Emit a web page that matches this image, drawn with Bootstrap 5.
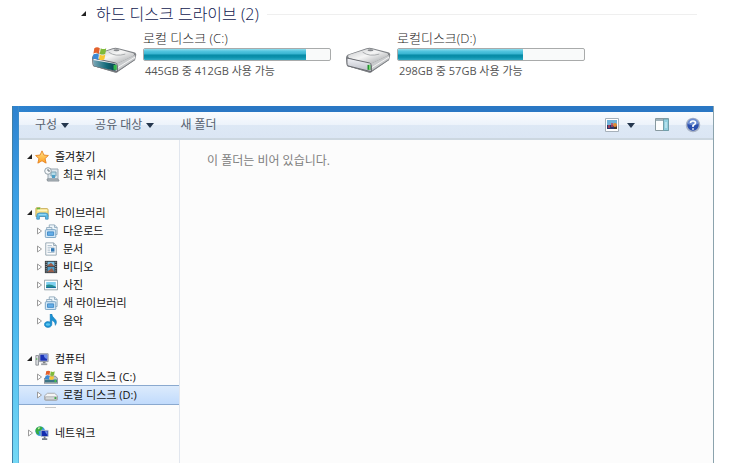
<!DOCTYPE html>
<html lang="ko">
<head>
<meta charset="utf-8">
<meta name="viewport" content="width=device-width, initial-scale=1">
<title>하드 디스크 드라이브</title>
<link href="https://cdn.jsdelivr.net/npm/bootstrap@5.3.0/dist/css/bootstrap.min.css" rel="stylesheet">
<style>
html, body { height: 100%; }
body { font-family: "Open Sans", "Noto Sans CJK KR", sans-serif; font-size: 12px; line-height: 18px; color: #111; overflow: hidden; }
svg { display: block; flex: none; }
.drives { padding: 3px 32px 26px 80px; }
.drives-title { font-size: 16px; line-height: 22px; color: #10184f; font-weight: 300; }
.drives-rule { height: 1px; background: #efefef; }
.drive-list { gap: 14px; padding: 4px 0 0 11px; }
.drive { width: 240px; gap: 5px; color: #1c1c1c; }
.drive-name { font-size: 13px; line-height: 19px; font-weight: 300; }
.drive-free { font-size: 11px; line-height: 18px; padding: 1px 0 0 2px; color: #555; }
.drive-icon { margin-top: 17px; }
.meter { height: 13px; border: 1px solid #a9abab; border-radius: 2px; background: #f9fafa; }
.meter-fill { background: linear-gradient(#8fdcec 0, #52c5df 20%, #35b2cf 48%, #078aa5 52%, #0b91ac 75%, #2cabc5 100%); }
.explorer { margin: 0 15px 0 12px; padding: 6px 0 0 7px; border-right: 1px solid #8ba3ad; background: linear-gradient(90deg, #3f7fa8 1px, transparent 1px, transparent 6px, #4b93c0 6px, transparent 7px), linear-gradient(90deg, transparent 7px, #2a77c4 60px) top / 100% 6px no-repeat, linear-gradient(#2d82cf, #3b9fe4 25%, #4bb8ee 60%, #74d8f5); }
.pane { background: #fcfcfc; }
.commands { height: 28px; background: linear-gradient(#fafcfe 0, #edf3fb 48%, #dde8f5 52%, #dbe6f4 100%); border-bottom: 2px solid #ccd7e0; padding: 0 12px 0 16px; }
.cmd { border: 0; background: none; padding: 0; color: #57616f; font: inherit; line-height: 20px; display: flex; align-items: center; gap: 4px; }
.cmd + .cmd-text { margin-left: 26px; }
.caret { width: 0; height: 0; border: 4px solid transparent; border-top: 5px solid #24364d; border-bottom: 0; }
.tree { width: 161px; border-right: 1px solid #e1e6ee; padding-top: 8px; font-size: 11px; }
.tree ul { margin: 0; padding: 0; list-style: none; }
.tree .groups { gap: 20px; }
.tree a { display: flex; align-items: center; height: 18px; gap: 1px; color: inherit; text-decoration: none; white-space: nowrap; padding-left: 7px; }
.tree span { padding-left: 5px; }
.tree ul ul a { padding-left: 16px; }
.tree ul ul span { padding-left: 4px; }
.tree ul ul .no-arrow { padding-left: 25px; }
.tree ul ul .no-arrow span { padding-left: 2px; }
.tree a.chosen { background: linear-gradient(#dcebfc, #c1dbfc); box-shadow: 0 -1px #8aa9cf, 0 1px #8aa9cf; }
.cut-off::after { content: ""; display: block; width: 11px; height: 1px; margin: 3px 0 -4px 26px; background: #c9c9c9; }
.empty-note { color: #808080; padding: 12px 27px; }
</style>
</head>
<body class="d-flex flex-column bg-white">
<svg width="0" height="0" class="position-absolute" aria-hidden="true">
  <defs>
    <linearGradient id="metal" x1="0" y1="0" x2="1" y2="1"><stop offset="0" stop-color="#c4c6c8"/><stop offset=".45" stop-color="#f5f5f5"/><stop offset="1" stop-color="#9b9ea1"/></linearGradient>
    <linearGradient id="front" x1="0" y1="0" x2="0" y2="1"><stop offset="0" stop-color="#f3f4f8"/><stop offset="1" stop-color="#b8bbc4"/></linearGradient>
    <linearGradient id="teal" x1="0" y1="0" x2="1" y2="0"><stop offset="0" stop-color="#7da8b8"/><stop offset=".6" stop-color="#126a79"/><stop offset="1" stop-color="#08424d"/></linearGradient>
    <linearGradient id="gold" x1="0" y1="0" x2="0" y2="1"><stop offset="0" stop-color="#ffe58a"/><stop offset="1" stop-color="#ff9d1e"/></linearGradient>
    <symbol id="drive" viewBox="0 0 48 28">
      <path d="M2 20 26 27 45 14V9L26 23 3 16z" fill="#77797c"/>
      <path d="M1 12Q1 9 4 8L22 2Q25 1 28 2L44 6Q47 7 46 10L45 14 27 26 25 27 2 20z" fill="#818488"/>
      <path d="M3 10Q4 8 6 8L22 3Q25 2 28 3L43 7Q45 8 43 10L26 18 4 12z" fill="url(#metal)"/>
      <path d="M26 18 45 9 45 13 27 25z" fill="#c9cbcd"/>
      <path d="M27 22 45 11" stroke="#f6f6f6"/>
      <path d="M2 12 25 17Q27 18 27 20V26L3 20Q2 19 2 17z" fill="url(#front)" stroke="#686b70"/>
      <path d="M23 19h3v5h-3z" fill="#1f8f2c"/><path d="M25 19v5" stroke="#79e070"/>
      <ellipse cx="26" cy="4" rx="3" ry="1" fill="#85888c"/>
      <path d="M18 6Q25 11 35 8" fill="none" stroke="#a8abad"/>
    </symbol>
    <symbol id="flag" viewBox="0 0 16 16">
      <path d="M2 2Q5 0 8 2L7 8Q4 6 1 8z" fill="#e3612c"/>
      <path d="M9 2Q12 4 15 2L14 8Q11 10 8 8z" fill="#7fba39"/>
      <path d="M1 9Q4 7 7 9L6 15Q3 13 0 14z" fill="#3b8ad6"/>
      <path d="M8 9Q11 11 14 9L13 14Q10 16 7 14z" fill="#f9c831"/>
    </symbol>
    <symbol id="open" viewBox="0 0 8 8"><path d="M6 1V6H1z" fill="#222"/></symbol>
    <symbol id="closed" viewBox="0 0 8 8"><path d="M2.500 1 6.500 4 2.500 7z" fill="#fff" stroke="#9c9c9c"/></symbol>
    <symbol id="star" viewBox="0 0 16 16"><path d="M8 1 10.2 5.8 15.3 6.3 11.5 9.8 12.7 15 8 12.3 3.3 15 4.5 9.8.7 6.3 5.8 5.8z" fill="url(#gold)" stroke="#e58120"/></symbol>
    <symbol id="recent" viewBox="0 0 16 16">
      <path d="M4 2H14V12H4z" fill="#dce5eb" stroke="#9aa7b1"/><path d="M7 5h5v4H7z" fill="#b6dce9" stroke="#7ba2b6"/><path d="M8 8h3v3H8z" fill="#4d9fc6"/>
      <path d="M3 12H13Q15 12 15 14H5Q3 15 3 12z" fill="#b2bac0" stroke="#8b949b"/>
      <circle cx="4" cy="4" r="3.3" fill="#f5f8fa" stroke="#94a1aa"/><path d="M4 2V4H6" fill="none" stroke="#65717a"/>
    </symbol>
    <symbol id="library" viewBox="0 0 16 16">
      <path d="M1 3Q1 2 2 2H6L7 3H14Q15 3 15 5V12H1z" fill="#f7df83" stroke="#c4a64a"/><path d="M2 3h4" stroke="#65b844" stroke-width="2"/><path d="M3 5H14" stroke="#fff5bd" stroke-width="2"/>
      <path d="M2 15V11Q2 8 5 8H12Q15 8 15 11V15H12V12H5V15z" fill="#58b9e7" stroke="#4d94bd"/><path d="M4 10H13" stroke="#b8e8fa"/>
    </symbol>
    <symbol id="stack" viewBox="0 0 16 16">
      <path d="M6 1H12L15 4V12H6z" fill="#eef6fb" stroke="#91a9bb"/><path d="M12 1V4H15" fill="none" stroke="#91a9bb"/><path d="M3 4H9V14H3z" fill="#e5f0f8" stroke="#91a9bb"/>
      <rect x="1.500" y="6.500" width="12" height="9" rx="1" fill="#d5e8f6" stroke="#6f9cbd"/><path d="M4 9H11V13H4z" fill="#64aee8" stroke="#3e87c4"/>
    </symbol>
    <symbol id="document" viewBox="0 0 16 16">
      <path d="M2 1H11L14 4V15H2z" fill="#fbfcfd" stroke="#8fa0ad"/><path d="M11 1V4H14" fill="#d7e2ea" stroke="#8fa0ad"/><path d="M4 4h5M4 6h8M4 8h3M4 10h3M4 12h8" stroke="#a8bbca"/><path d="M8 7h4v4H8z" fill="#3379b4"/>
    </symbol>
    <symbol id="video" viewBox="0 0 16 16">
      <path d="M1 1H15V15H1z" fill="#32383d"/><path d="M4 2h8v5H4z" fill="#79c2e6"/><path d="M4 8h8v6H4z" fill="#4f9ac5"/><path d="M4 6 8 3 12 7H4zM4 13 9 9 12 14H4z" fill="#985d4a"/>
      <path d="M2.500 2v13M13.500 2v13" stroke="#e0e6e9" stroke-dasharray="1 1.500"/>
    </symbol>
    <symbol id="photo" viewBox="0 0 16 16">
      <path d="M.5 2.500H15.500V13.500H.5z" fill="#fff" stroke="#8d9ba4"/><path d="M2.500 4.500h11v7h-11z" fill="#80d0f0"/><path d="M2.500 8Q7 6 13.500 10V11.500H2.500z" fill="#258e91"/><path d="M2.500 10.500h11v1h-11z" fill="#1768a0"/>
    </symbol>
    <symbol id="music" viewBox="0 0 16 16"><path d="M7 0H9Q9 3 12 5 16 8 13 13 13 9 9 7V12A4.300 3.500 0 1 1 7 9z" fill="#1c91d2" stroke="#0f72b0" stroke-width=".5"/><ellipse cx="4.500" cy="12" rx="2.500" ry="1.500" fill="#5cc7f0"/></symbol>
    <symbol id="computer" viewBox="0 0 16 16">
      <path d="M1 4H4V15H1z" fill="#d9dcdf" stroke="#888d92"/><path d="M2 7v2" stroke="#43b33d"/>
      <path d="M5 2H15V11H5z" fill="#d3d8e2" stroke="#878e9c"/><path d="M6 3h8v7H6z" fill="#1b32b4"/><path d="M10 3h4v5Q10 7 10 3z" fill="#6d8cec"/><path d="M9 11h3v2H9z" fill="#7c8086"/><path d="M7 14h7" stroke="#9a9ea3" stroke-width="2"/>
    </symbol>
    <symbol id="small-drive" viewBox="0 0 16 16">
      <path d="M4 6H12L15.500 9V13Q15.500 14 14 14H2Q.5 14 .5 13V9z" fill="#f4f5f5" stroke="#a2a5a8"/><path d="M1.500 10H14.500V13.500H1.500z" fill="#d5d8da" stroke="#85898d" stroke-width=".6"/><path d="M12 10.500h2v2h-2z" fill="#2da537"/>
    </symbol>
    <symbol id="system-drive" viewBox="0 0 16 16">
      <path d="M4 7H13L16 10V15H0V10z" fill="#b9c1c7" stroke="#757d83"/><path d="M1 11h14v3H1z" fill="#3b7485"/><path d="M12 11h2v3h-2z" fill="#43c34a"/>
      <use href="#flag" x="1" width="12" height="12"/>
    </symbol>
    <symbol id="network" viewBox="0 0 16 16">
      <circle cx="6" cy="6" r="5.500" fill="#3a9bdd"/><path d="M2 2Q6-1 9 2L7 5 4 6 5 10 2 9Q-1 5 2 2z" fill="#37ad42"/><path d="M3 2Q5 1 6 2L4 4z" fill="#d1efac"/>
      <path d="M7 5H15V12H7z" fill="#142cae" stroke="#b0bac8"/><path d="M11 6h3v4z" fill="#7897ea"/><path d="M11 12v2M8 15h6" stroke="#737b86" stroke-width="2"/>
    </symbol>
  </defs>
</svg>

<section class="drives flex-shrink-0">
  <div class="d-flex align-items-center">
    <svg width="8" height="8"><use href="#open"/></svg>
    <h1 class="drives-title mb-0 ms-1 me-2 ps-1">하드 디스크 드라이브 (2)</h1>
    <div class="drives-rule flex-grow-1"></div>
  </div>
  <div class="drive-list d-flex">
    <article class="drive d-flex">
      <svg class="drive-icon" width="47" height="28" viewBox="0 0 48 28"><use href="#drive"/><path d="M2 14 25 18V25L3 20z" fill="url(#teal)"/><path d="M23 19h3v5h-3z" fill="#32b84a"/><use href="#flag" x="1" y="0" width="16" height="15"/></svg>
      <div class="flex-grow-1">
        <div class="drive-name" id="name-c">로컬 디스크 (C:)</div>
        <div class="progress meter" role="progressbar" aria-labelledby="name-c" aria-valuenow="87" aria-valuemin="0" aria-valuemax="100"><div class="progress-bar meter-fill" style="width:87%"></div></div>
        <div class="drive-free">445GB 중 412GB 사용 가능</div>
      </div>
    </article>
    <article class="drive d-flex">
      <svg class="drive-icon" width="47" height="28"><use href="#drive"/></svg>
      <div class="flex-grow-1">
        <div class="drive-name" id="name-d">로컬디스크(D:)</div>
        <div class="progress meter" role="progressbar" aria-labelledby="name-d" aria-valuenow="67" aria-valuemin="0" aria-valuemax="100"><div class="progress-bar meter-fill" style="width:67%"></div></div>
        <div class="drive-free">298GB 중 57GB 사용 가능</div>
      </div>
    </article>
  </div>
</section>

<main class="explorer flex-grow-1 d-flex flex-column">
  <div class="commands d-flex align-items-center flex-shrink-0" role="toolbar" aria-label="폴더 도구">
    <button class="cmd" type="button">구성 <span class="caret"></span></button>
    <button class="cmd cmd-text" type="button">공유 대상 <span class="caret"></span></button>
    <button class="cmd cmd-text" type="button">새 폴더</button>
    <button class="cmd ms-auto" type="button" aria-label="보기 변경">
      <svg width="14" height="14" viewBox="0 0 14 14"><path d="M.5.5h13v13H.5z" fill="#fff" stroke="#a6b0ba"/><path d="M2 2h10v5H2z" fill="#6fb2d9"/><path d="M2 7h10v4H2z" fill="#28376c"/><path d="M4 7v3M7 5v4" stroke="#c1435a" stroke-width="1.500"/><circle cx="10" cy="7" r="2" fill="#e28a30"/><path d="M9 9h3v2H9z" fill="#443528"/></svg>
      <span class="caret ms-1"></span>
    </button>
    <button class="cmd ms-3 ps-1" type="button" aria-label="미리 보기 창">
      <svg width="14" height="14" viewBox="0 0 14 14"><path d="M.5.5h13v12H.5z" fill="#fcfdfd" stroke="#88999f"/><path d="M1 2h8" stroke="#9fb2ba" stroke-width="2"/><path d="M8.500 1h5v11.500h-5z" fill="#91cfdf" stroke="#719faa"/><path d="M11 4v6" stroke="#d8f1f7"/></svg>
    </button>
    <button class="cmd ms-3" type="button" aria-label="도움말">
      <svg width="16" height="16" viewBox="0 0 16 16"><circle cx="8" cy="8" r="6.500" fill="#2b4fae" stroke="#a9b3c6" stroke-width="1.500"/><path d="M2.500 7A5.500 5.500 0 0 1 13.500 7Q8 9 2.500 7" fill="#6e8ed2"/><path d="M5.500 6Q5.500 4 8 4 10.500 4 10.500 6 10.500 7 8 8.500V10M8 11.200v1.500" fill="none" stroke="#fff" stroke-width="1.600"/></svg>
    </button>
  </div>
  <div class="pane d-flex flex-grow-1">
    <nav class="tree flex-shrink-0" aria-label="탐색">
      <ul class="groups d-flex flex-column">
        <li><a href="#"><svg width="8" height="8"><use href="#open"/></svg><svg width="14" height="14"><use href="#star"/></svg><span>즐겨찾기</span></a>
          <ul><li><a class="no-arrow" href="#"><svg width="16" height="16"><use href="#recent"/></svg><span>최근 위치</span></a></li></ul></li>
        <li><a href="#"><svg width="8" height="8"><use href="#open"/></svg><svg width="14" height="14"><use href="#library"/></svg><span>라이브러리</span></a>
          <ul>
            <li><a href="#"><svg width="8" height="8"><use href="#closed"/></svg><svg width="14" height="14"><use href="#stack"/></svg><span>다운로드</span></a></li>
            <li><a href="#"><svg width="8" height="8"><use href="#closed"/></svg><svg width="14" height="14"><use href="#document"/></svg><span>문서</span></a></li>
            <li><a href="#"><svg width="8" height="8"><use href="#closed"/></svg><svg width="14" height="14"><use href="#video"/></svg><span>비디오</span></a></li>
            <li><a href="#"><svg width="8" height="8"><use href="#closed"/></svg><svg width="14" height="14"><use href="#photo"/></svg><span>사진</span></a></li>
            <li><a href="#"><svg width="8" height="8"><use href="#closed"/></svg><svg width="14" height="14"><use href="#stack"/></svg><span>새 라이브러리</span></a></li>
            <li><a href="#"><svg width="8" height="8"><use href="#closed"/></svg><svg width="14" height="14"><use href="#music"/></svg><span>음악</span></a></li>
          </ul></li>
        <li><a href="#"><svg width="8" height="8"><use href="#open"/></svg><svg width="14" height="14"><use href="#computer"/></svg><span>컴퓨터</span></a>
          <ul class="cut-off">
            <li><a href="#"><svg width="8" height="8"><use href="#closed"/></svg><svg width="14" height="14"><use href="#system-drive"/></svg><span>로컬 디스크 (C:)</span></a></li>
            <li><a class="chosen" href="#" aria-current="true"><svg width="8" height="8"><use href="#closed"/></svg><svg width="14" height="14"><use href="#small-drive"/></svg><span>로컬 디스크 (D:)</span></a></li>
          </ul></li>
        <li><a href="#"><svg width="8" height="8"><use href="#closed"/></svg><svg width="14" height="14"><use href="#network"/></svg><span>네트워크</span></a></li>
      </ul>
    </nav>
    <p class="empty-note mb-0">이 폴더는 비어 있습니다.</p>
  </div>
</main>
<script src="https://cdn.jsdelivr.net/npm/bootstrap@5.3.0/dist/js/bootstrap.bundle.min.js"></script>
</body>
</html>
